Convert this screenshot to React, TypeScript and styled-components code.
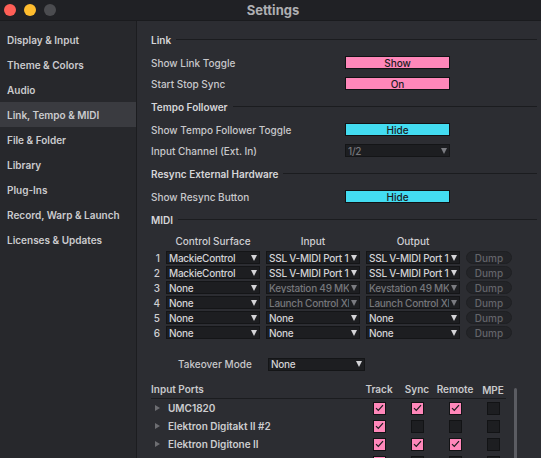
import React from "react";
import styled, { createGlobalStyle, css } from "styled-components";

const Global = createGlobalStyle`
  html, body { margin: 0; padding: 0; background: #2c2d32; }
  body { width: 541px; height: 458px; overflow: hidden; }
  * { box-sizing: border-box; }
`;

const FONT = `Inter, "Open Sans", "Liberation Sans", sans-serif`;

const Window = styled.div`
  width: 541px;
  height: 458px;
  display: flex;
  flex-direction: column;
  background: #2c2d32;
  font-family: ${FONT};
  color: #c8c8cb;
  overflow: hidden;
`;

const TitleBar = styled.div`
  height: 21px;
  flex: none;
  display: flex;
  align-items: center;
  position: relative;
  background: #202125;
  border-bottom: 1px solid #1a1b1e;
`;

const Lights = styled.div`
  display: flex;
  gap: 8px;
  padding-left: 4px;
`;

const Light = styled.span<{ $c: string }>`
  width: 12px;
  height: 12px;
  border-radius: 50%;
  background: ${(p) => p.$c};
`;

const Title = styled.div`
  position: absolute;
  left: 0;
  right: 0;
  text-align: center;
  font-size: 13px;
  font-weight: 700;
  color: #aeafb2;
  pointer-events: none;
  padding-left: 5px;
`;

const Body = styled.div`
  flex: 1;
  display: flex;
  min-height: 0;
`;

const Sidebar = styled.nav`
  width: 137px;
  flex: none;
  background: #27282c;
  border-right: 1px solid #1c1d20;
  padding-top: 6px;
  display: flex;
  flex-direction: column;
`;

const NavItem = styled.div<{ $active?: boolean }>`
  height: 25px;
  flex: none;
  display: flex;
  align-items: center;
  padding-left: 7px;
  font-size: 10px;
  font-weight: 600;
  color: #cbcbce;
  white-space: nowrap;
  ${(p) =>
    p.$active &&
    css`
      background: #3a3b40;
    `}
`;

const Main = styled.main`
  flex: 1;
  position: relative;
  padding: 6px 4px 0 14px;
  display: flex;
  flex-direction: column;
  overflow: hidden;
  & > * {
    flex-shrink: 0;
  }
`;

const SectionHeader = styled.div`
  height: 25px;
  display: flex;
  align-items: center;
  gap: 5px;
  font-size: 10px;
  font-weight: 600;
  color: #d6d6d9;
  &::after {
    content: "";
    flex: 1;
    height: 1px;
    background: #1b1c1f;
  }
`;

const SettingRow = styled.div`
  height: 21px;
  display: grid;
  grid-template-columns: 194px 105px;
  align-items: center;
  font-size: 10px;
  font-weight: 500;
`;

const Toggle = styled.div<{ $tone: "pink" | "cyan" }>`
  height: 13px;
  border: 1px solid #111214;
  background: ${(p) => (p.$tone === "pink" ? "#ff87ba" : "#43dcf1")};
  color: #1b1b1d;
  font-size: 10px;
  font-weight: 500;
  display: flex;
  align-items: center;
  justify-content: center;
  line-height: 1;
`;

const Select = styled.div<{ $dim?: boolean; $w?: number }>`
  position: relative;
  height: 13px;
  ${(p) => p.$w && css`width: ${p.$w}px;`}
  border: 1px solid #141517;
  background: #1d1e21;
  color: ${(p) => (p.$dim ? "#76777b" : "#d2d2d5")};
  font-size: 10px;
  font-weight: 500;
  letter-spacing: -0.25px;
  display: flex;
  align-items: center;
  padding: 0 0 0 2px;
  line-height: 1;
  white-space: nowrap;
  overflow: hidden;
`;

const SelectText = styled.span`
  flex: 1;
  overflow: hidden;
  white-space: nowrap;
`;

/* the caret sits over the clipped end of a long value */
const Caret = styled.span<{ $dim?: boolean }>`
  position: absolute;
  right: 0;
  top: 0;
  bottom: 0;
  width: 10px;
  background: #1d1e21;
  display: flex;
  align-items: center;
  justify-content: center;
  &::before {
    content: "";
    width: 0;
    height: 0;
    border-left: 3.5px solid transparent;
    border-right: 3.5px solid transparent;
    border-top: 6px solid ${(p) => (p.$dim ? "#7a7b80" : "#d4d4d7")};
  }
`;

const MidiGrid = styled.div`
  display: grid;
  grid-template-columns: 9px 94px 94px 94px 46px;
  column-gap: 6px;
  grid-template-rows: 18px;
  grid-auto-rows: 15px;
  align-items: center;
  font-size: 10px;
  font-weight: 500;
`;

const ColHead = styled.div`
  display: flex;
  align-items: center;
  justify-content: center;
  font-size: 10px;
  font-weight: 500;
  color: #cfcfd2;
`;

const RowNum = styled.div`
  text-align: right;
  color: #cfcfd2;
  font-size: 10px;
`;

const Dump = styled.div`
  height: 13px;
  border-radius: 7px;
  background: #232428;
  border: 1px solid #1f2023;
  color: #64656a;
  font-size: 10px;
  display: flex;
  align-items: center;
  justify-content: center;
  line-height: 1;
`;

const TakeoverRow = styled.div`
  margin-top: 16px;
  height: 16px;
  display: flex;
  align-items: center;
  padding-left: 27px;
  font-size: 10px;
  font-weight: 500;
`;

const TakeoverLabel = styled.span`
  width: 90px;
`;

const Ports = styled.div`
  margin-top: 8px;
  width: 361px;
  display: grid;
  grid-template-columns: 1fr 38px 38px 38px 38px;
  font-size: 10px;
`;

const PortsHeadCell = styled.div<{ $left?: boolean; $short?: boolean }>`
  height: 19px;
  display: flex;
  align-items: center;
  justify-content: ${(p) => (p.$left ? "flex-start" : "center")};
  font-weight: 600;
  color: #c9c9cc;
  border-bottom: 1px solid #1b1c1f;
  ${(p) =>
    p.$short &&
    css`
      border-bottom: none;
      box-shadow: inset 0 0 0 transparent;
      background: linear-gradient(#1b1c1f, #1b1c1f) no-repeat left bottom / 32px 1px;
    `}
`;

const PortName = styled.div`
  height: 18px;
  display: flex;
  align-items: center;
  gap: 8px;
  padding-left: 4px;
  font-weight: 600;
  color: #cdcdd0;
`;

const Expander = styled.span`
  width: 0;
  height: 0;
  border-top: 3.5px solid transparent;
  border-bottom: 3.5px solid transparent;
  border-left: 5px solid #6d6e72;
`;

const CheckCell = styled.div`
  height: 18px;
  display: flex;
  align-items: center;
  justify-content: center;
`;

const Box = styled.div<{ $on: boolean }>`
  width: 13px;
  height: 13px;
  border: 1px solid #121315;
  background: ${(p) => (p.$on ? "#ff87ba" : "#1d1e21")};
  display: flex;
  align-items: center;
  justify-content: center;
`;

const ScrollThumb = styled.div`
  position: absolute;
  left: 377px;
  top: 367px;
  width: 3px;
  height: 90px;
  border-radius: 2px;
  background: #5b5c62;
`;

const Check = () => (
  <svg width="9" height="8" viewBox="0 0 9 8">
    <path d="M1 4.2 L3.3 6.5 L8 1.2" fill="none" stroke="#1c1c1e" strokeWidth="1.2" />
  </svg>
);

const SelectBox = ({ text, dim, w }: { text: string; dim?: boolean; w?: number }) => (
  <Select $dim={dim} $w={w}>
    <SelectText>{text}</SelectText>
    <Caret $dim={dim} />
  </Select>
);

const navItems = [
  "Display & Input",
  "Theme & Colors",
  "Audio",
  "Link, Tempo & MIDI",
  "File & Folder",
  "Library",
  "Plug-Ins",
  "Record, Warp & Launch",
  "Licenses & Updates",
];

type Cell = { text: string; dim?: boolean };
const midiRows: [Cell, Cell, Cell][] = [
  [{ text: "MackieControl" }, { text: "SSL V-MIDI Port 1" }, { text: "SSL V-MIDI Port 1" }],
  [{ text: "MackieControl" }, { text: "SSL V-MIDI Port 1" }, { text: "SSL V-MIDI Port 1" }],
  [{ text: "None" }, { text: "Keystation 49 MK3", dim: true }, { text: "Keystation 49 MK3", dim: true }],
  [{ text: "None" }, { text: "Launch Control XL", dim: true }, { text: "Launch Control XL", dim: true }],
  [{ text: "None" }, { text: "None" }, { text: "None" }],
  [{ text: "None" }, { text: "None" }, { text: "None" }],
];

const ports: { name: string; flags: boolean[] }[] = [
  { name: "UMC1820", flags: [true, true, true, false] },
  { name: "Elektron Digitakt II #2", flags: [true, false, false, false] },
  { name: "Elektron Digitone II", flags: [true, true, true, false] },
  { name: "Elektron Syntakt", flags: [true, false, false, false] },
];

export default function App() {
  return (
    <Window>
      <Global />
      <TitleBar>
        <Lights>
          <Light $c="#fe5f57" />
          <Light $c="#febc2e" />
          <Light $c="#4b4c50" />
        </Lights>
        <Title>Settings</Title>
      </TitleBar>
      <Body>
        <Sidebar>
          {navItems.map((n) => (
            <NavItem key={n} $active={n === "Link, Tempo & MIDI"}>
              {n}
            </NavItem>
          ))}
        </Sidebar>
        <Main>
          <SectionHeader>Link</SectionHeader>
          <SettingRow>
            <span>Show Link Toggle</span>
            <Toggle $tone="pink">Show</Toggle>
          </SettingRow>
          <SettingRow>
            <span>Start Stop Sync</span>
            <Toggle $tone="pink">On</Toggle>
          </SettingRow>

          <SectionHeader>Tempo Follower</SectionHeader>
          <SettingRow>
            <span>Show Tempo Follower Toggle</span>
            <Toggle $tone="cyan">Hide</Toggle>
          </SettingRow>
          <SettingRow>
            <span>Input Channel (Ext. In)</span>
            <SelectBox text="1/2" dim />
          </SettingRow>

          <SectionHeader>Resync External Hardware</SectionHeader>
          <SettingRow>
            <span>Show Resync Button</span>
            <Toggle $tone="cyan">Hide</Toggle>
          </SettingRow>

          <SectionHeader>MIDI</SectionHeader>
          <MidiGrid>
            <span />
            <ColHead>Control Surface</ColHead>
            <ColHead>Input</ColHead>
            <ColHead>Output</ColHead>
            <span />
            {midiRows.map((r, i) => (
              <React.Fragment key={i}>
                <RowNum>{i + 1}</RowNum>
                <SelectBox text={r[0].text} dim={r[0].dim} />
                <SelectBox text={r[1].text} dim={r[1].dim} />
                <SelectBox text={r[2].text} dim={r[2].dim} />
                <Dump>Dump</Dump>
              </React.Fragment>
            ))}
          </MidiGrid>

          <TakeoverRow>
            <TakeoverLabel>Takeover Mode</TakeoverLabel>
            <SelectBox text="None" w={97} />
          </TakeoverRow>

          <Ports>
            <PortsHeadCell $left>Input Ports</PortsHeadCell>
            <PortsHeadCell>Track</PortsHeadCell>
            <PortsHeadCell>Sync</PortsHeadCell>
            <PortsHeadCell>Remote</PortsHeadCell>
            <PortsHeadCell $short>MPE</PortsHeadCell>
            {ports.map((p) => (
              <React.Fragment key={p.name}>
                <PortName>
                  <Expander />
                  {p.name}
                </PortName>
                {p.flags.map((f, j) => (
                  <CheckCell key={j}>
                    <Box $on={f}>{f && <Check />}</Box>
                  </CheckCell>
                ))}
              </React.Fragment>
            ))}
          </Ports>
          <ScrollThumb />
        </Main>
      </Body>
    </Window>
  );
}
